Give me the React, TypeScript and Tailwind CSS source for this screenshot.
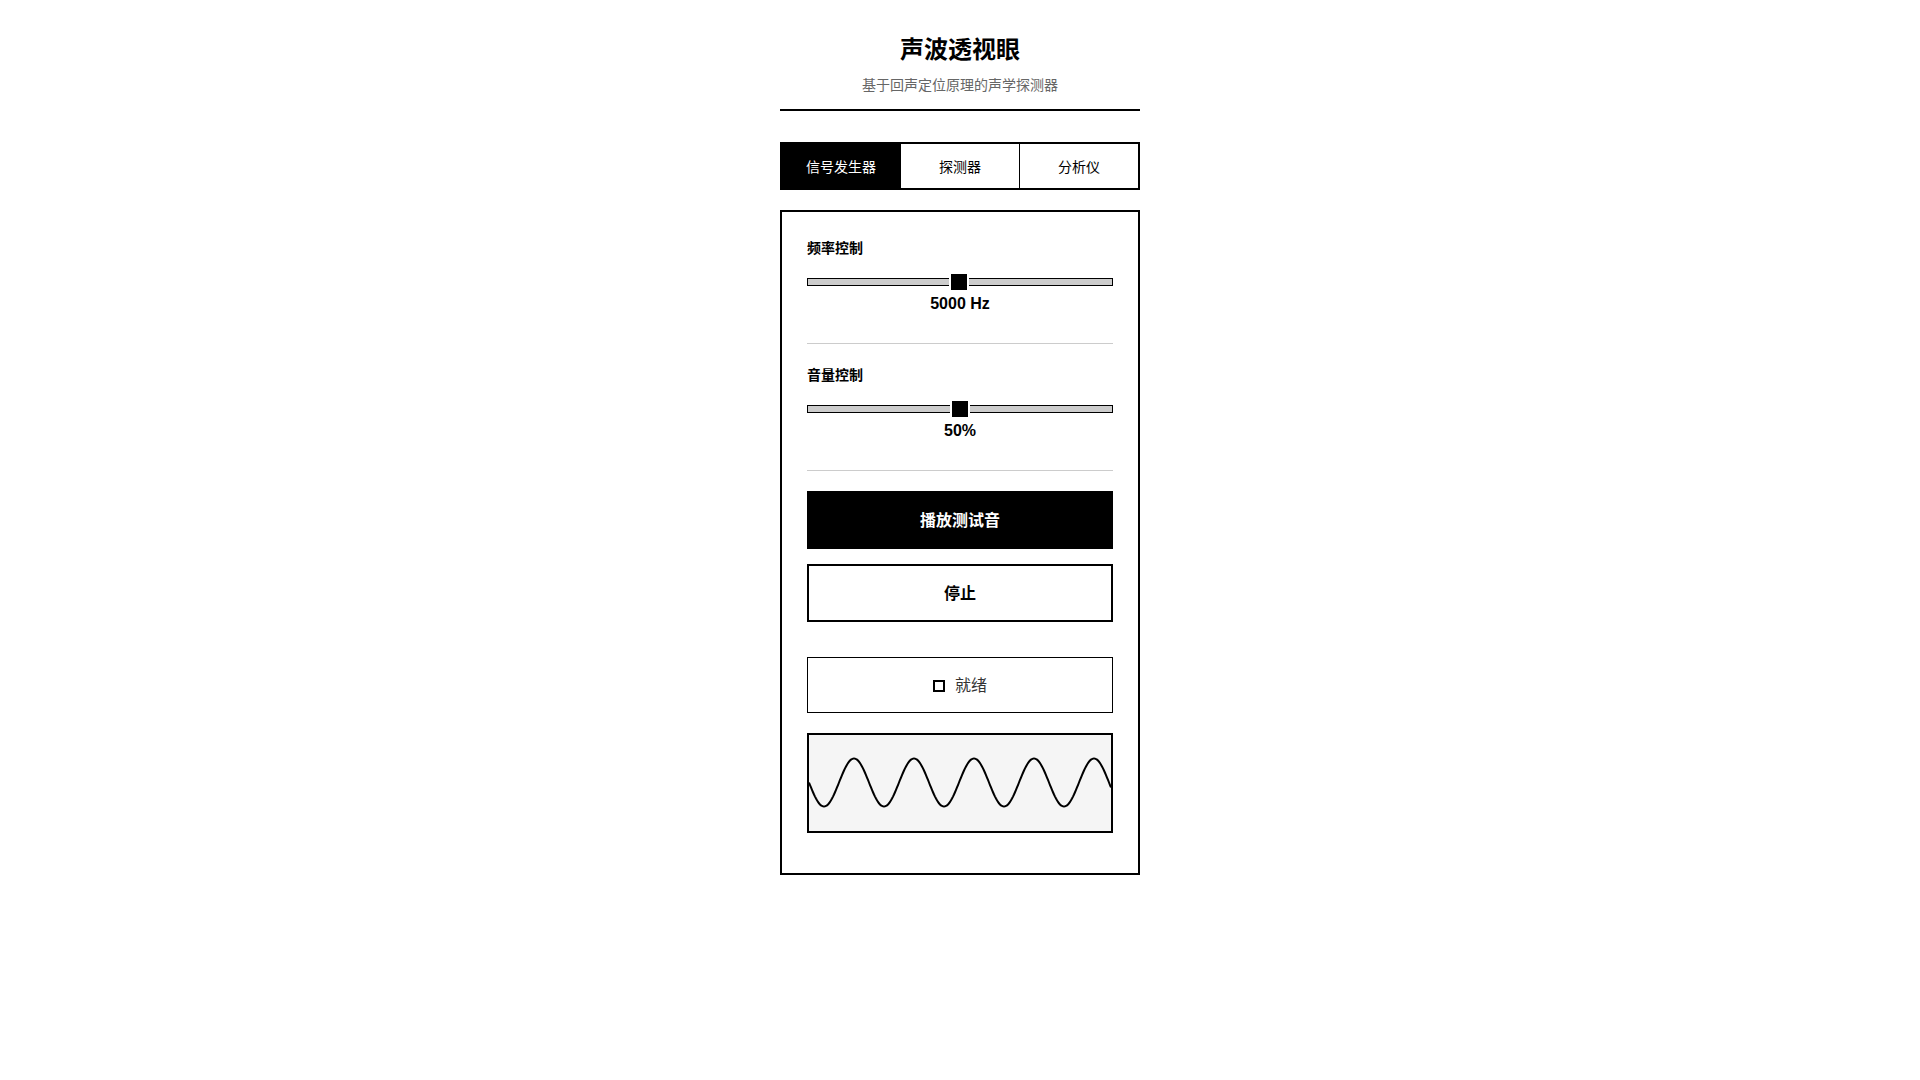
import React from "react";

const FONT = '"Liberation Sans", "Noto Sans CJK SC", sans-serif';

interface SliderProps {
  label: string;
  value: string;
  ratio: number;
  className?: string;
}

function Slider({ label, value, ratio, className }: SliderProps) {
  return (
    <div className={`border-b border-[#cccccc] pb-[27px] ${className ?? ""}`}>
      <div className="text-[14px] font-bold leading-[24px] text-black">{label}</div>
      <div className="relative mt-[14px] flex h-4 items-center">
        <div className="h-2 w-full border border-black bg-[#cccccc]" />
        <div
          className="absolute top-1/2 h-5 w-5 -translate-x-1/2 -translate-y-1/2 border-2 border-white bg-black"
          style={{ left: `calc(8px + ${ratio} * (100% - 16px))` }}
        />
      </div>
      <div className="mt-[2px] text-center text-[16px] font-bold leading-[24px] text-black">{value}</div>
    </div>
  );
}

function Wave() {
  const w = 302;
  const h = 96;
  const pts: string[] = [];
  for (let x = 0; x <= w; x += 1) {
    const y = 47.5 + 24 * Math.sin((2 * Math.PI * x) / 60);
    pts.push(`${x === 0 ? "M" : "L"}${x},${y.toFixed(2)}`);
  }
  return (
    <svg width="100%" height="100%" viewBox={`0 0 ${w} ${h}`} preserveAspectRatio="none" className="block">
      <path d={pts.join(" ")} fill="none" stroke="#000" strokeWidth={2} />
    </svg>
  );
}

const tabs = ["信号发生器", "探测器", "分析仪"];

export default function App() {
  return (
    <div className="min-h-screen bg-white text-black" style={{ fontFamily: FONT }}>
      <div className="mx-auto w-[360px] pt-[36px]">
        <header className="border-b-2 border-black pb-[14px] text-center">
          <h1 className="text-[24px] font-bold leading-[28px]">声波透视眼</h1>
          <p className="mt-[11px] text-[14px] leading-[20px] text-[#666666]">基于回声定位原理的声学探测器</p>
        </header>

        <nav className="mt-[31px] flex h-[48px] border-2 border-black">
          {tabs.map((t, i) => (
            <div
              key={t}
              className={
                i === 0
                  ? "flex flex-1 items-center justify-center bg-black pt-[2px] text-[14px] text-white"
                  : "flex flex-1 items-center justify-center border-l border-black bg-white pt-[2px] text-[14px] text-black"
              }
            >
              {t}
            </div>
          ))}
        </nav>

        <section className="mt-[20px] border-2 border-black px-[25px] pt-6 pb-[40px]">
          <Slider label="频率控制" value="5000 Hz" ratio={0.495} />
          <Slider label="音量控制" value="50%" ratio={0.5} className="pt-[19px]" />

          <button className="mt-[20px] flex h-[58px] w-full items-center justify-center bg-black pt-[2px] text-[16px] font-bold text-white">
            播放测试音
          </button>
          <button className="mt-[15px] flex h-[58px] w-full items-center justify-center border-2 border-black bg-white pt-[2px] text-[16px] font-bold text-black">
            停止
          </button>

          <div className="mt-[35px] flex h-[56px] items-center justify-center gap-[10px] border border-black pt-[2px]">
            <span className="h-[12px] w-[12px] border-2 border-black" />
            <span className="text-[16px] leading-[24px] text-[#333333]">就绪</span>
          </div>

          <div className="mt-[20px] h-[100px] border-2 border-black bg-[#f5f5f5]">
            <Wave />
          </div>
        </section>
      </div>
    </div>
  );
}
